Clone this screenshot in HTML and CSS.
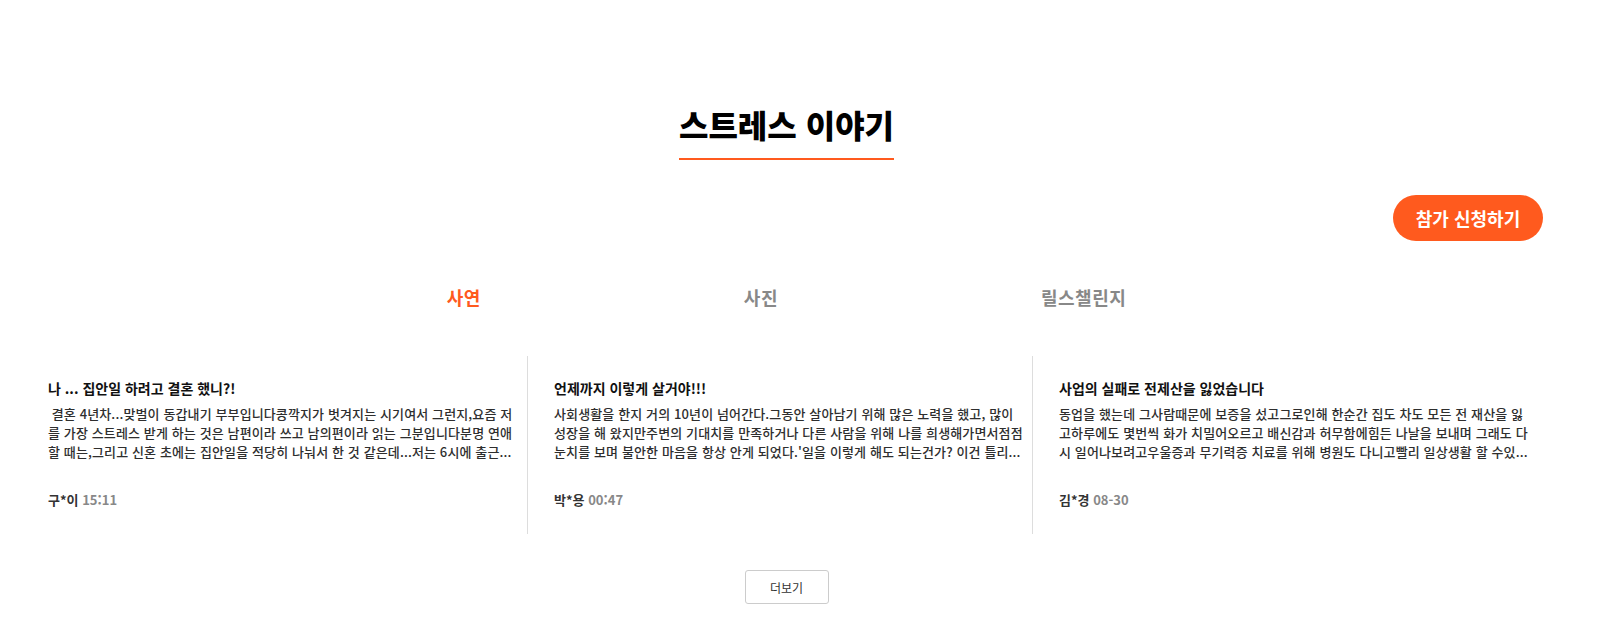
FILE: index.html
```html
<!DOCTYPE html>
<html lang="ko">
<head>
  <meta charset="UTF-8">
  <title>스트레스 이야기</title>
  <link rel="stylesheet" href="styles.css">
</head>
<body>
  <div class="wrap">
    <div class="head">
      <h2 class="title">스트레스 이야기</h2>
    </div>

    <div class="apply-row">
      <button class="apply-btn">참가 신청하기</button>
    </div>

    <ul class="tabs">
      <li class="tab on">사연</li>
      <li class="tab">사진</li>
      <li class="tab">릴스챌린지</li>
    </ul>

    <div class="cards">
      <div class="card">
        <p class="card-title">나 ... 집안일 하려고 결혼 했니?!</p>
        <p class="card-text">&nbsp;결혼 4년차...맞벌이 동갑내기 부부입니다콩깍지가 벗겨지는 시기여서 그런지,요즘 저<br>를 가장 스트레스 받게 하는 것은 남편이라 쓰고 남의편이라 읽는 그분입니다분명 연애<br>할 때는,그리고 신혼 초에는 집안일을 적당히 나눠서 한 것 같은데...저는 6시에 출근...</p>
        <p class="card-info">구*이 <span class="time">15:11</span></p>
      </div>
      <div class="card">
        <p class="card-title">언제까지 이렇게 살거야!!!</p>
        <p class="card-text">사회생활을 한지 거의 10년이 넘어간다.그동안 살아남기 위해 많은 노력을 했고, 많이<br>성장을 해 왔지만주변의 기대치를 만족하거나 다른 사람을 위해 나를 희생해가면서점점<br>눈치를 보며 불안한 마음을 항상 안게 되었다.'일을 이렇게 해도 되는건가? 이건 틀리...</p>
        <p class="card-info">박*용 <span class="time">00:47</span></p>
      </div>
      <div class="card">
        <p class="card-title">사업의 실패로 전제산을 잃었습니다</p>
        <p class="card-text">동업을 했는데 그사람때문에 보증을 섰고그로인해 한순간 집도 차도 모든 전 재산을 잃<br>고하루에도 몇번씩 화가 치밀어오르고 배신감과 허무함에힘든 나날을 보내며 그래도 다<br>시 일어나보려고우울증과 무기력증 치료를 위해 병원도 다니고빨리 일상생활 할 수있...</p>
        <p class="card-info">김*경 <span class="time">08-30</span></p>
      </div>
    </div>

    <div class="more-row">
      <button class="more-btn">더보기</button>
    </div>
  </div>
</body>
</html>
```

FILE: styles.css
```css
body{
  margin:0;
  background-color:#ffffff;
  color:#111111;
  font-family:"Noto Sans CJK KR", "Noto Sans", sans-serif;
}
.wrap{
  width:1529px;
  margin-left:22px;
}
.head{
  text-align:center;
  padding-top:104px;
}
.title{
  display:inline-block;
  margin:0;
  font-size:32px;
  line-height:40px;
  font-weight:900;
  color:#000000;
  padding-bottom:14px;
  border-bottom:2px solid #ff5a1e;
}
.apply-row{
  display:flex;
  justify-content:flex-end;
  margin-top:35px;
  padding-right:8px;
}
.apply-btn{
  width:150px;
  height:46px;
  border:none;
  border-radius:23px;
  background-color:#ff5a1e;
  color:#ffffff;
  font-family:inherit;
  font-size:18px;
  font-weight:700;
  cursor:pointer;
}
.tabs{
  display:flex;
  justify-content:center;
  gap:263px;
  list-style:none;
  margin:44px 0 0 0;
  padding:0;
}
.tab{
  font-size:18px;
  line-height:24px;
  font-weight:700;
  letter-spacing:0.5px;
  color:#888888;
  cursor:pointer;
}
.tab.on{
  color:#ff5a1e;
}
.cards{
  display:flex;
  margin-top:47px;
}
.card{
  width:505px;
  box-sizing:border-box;
  padding:22px 15px 25px 26px;
}
.card + .card{
  border-left:1px solid #dddddd;
}
.card p{
  margin:0;
}
.card-title{
  font-size:14px;
  line-height:20px;
  font-weight:700;
  color:#111111;
}
.card-text{
  margin-top:6px !important;
  font-size:13px;
  line-height:19px;
  font-weight:500;
  letter-spacing:0.12px;
  color:#2e2e2e;
  white-space:nowrap;
}
.card-info{
  margin-top:29px !important;
  font-size:13px;
  line-height:19px;
  font-weight:700;
  color:#333333;
}
.time{
  color:#888888;
}
.more-row{
  display:flex;
  justify-content:center;
  margin-top:36px;
}
.more-btn{
  width:84px;
  height:34px;
  background-color:#ffffff;
  border:1px solid #cccccc;
  border-radius:3px;
  font-family:inherit;
  font-size:12px;
  color:#333333;
  cursor:pointer;
}
```
